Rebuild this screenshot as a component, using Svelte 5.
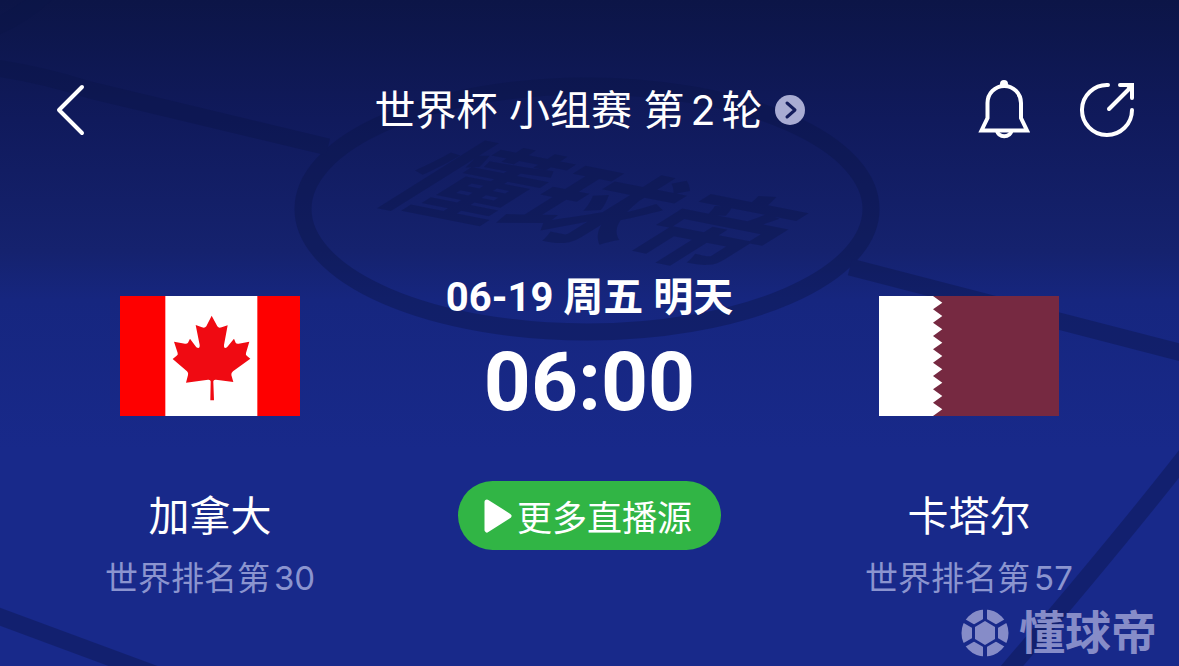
<script lang="ts">
  interface Team {
    name: string;
    rank: number;
    flag: 'canada' | 'qatar';
  }

  const home: Team = { name: '加拿大', rank: 30, flag: 'canada' };
  const away: Team = { name: '卡塔尔', rank: 57, flag: 'qatar' };

  // serrated edge of the Qatar flag, nine teeth
  const teeth = Array.from({ length: 9 }, (_, i) => `L190 ${i * 40 + 20} L162 ${i * 40 + 40}`).join(' ');
</script>

{#snippet teamCard(team: Team)}
  <div class="team">
    {#if team.flag === 'canada'}
      <svg class="team__flag" viewBox="0 0 540 360" role="img" aria-label={team.name}>
        <rect width="540" height="360" fill="#fff" />
        <rect width="136" height="360" fill="#fe0000" />
        <rect x="412" width="128" height="360" fill="#fe0000" />
        <path
          fill="#f00a12"
          d="M275 59 L259 91 Q254 98 246 94 L227 87 L239 147 Q240 160 229 154 L210 128 L204 140 Q201 144 195 143 L162 137 L173 171 Q175 177 169 180 L158 189 L201 226 Q206 231 204 237 L198 260 L264 251 Q273 250 272 259 L271 313 L282 313 L280 259 Q279 250 288 251 L340 258 L334 237 Q333 231 339 226 L391 188 L381 180 Q376 177 378 171 L388 137 L356 143 Q349 144 347 140 L342 128 L321 154 Q311 160 312 147 L323 88 L305 94 Q296 98 292 91 Z"
        />
      </svg>
    {:else}
      <svg class="team__flag" viewBox="0 0 540 360" role="img" aria-label={team.name}>
        <rect width="540" height="360" fill="#762941" />
        <path fill="#fff" d="M0 0 L162 0 {teeth} L0 360 Z" />
      </svg>
    {/if}
    <div class="team__name">{team.name}</div>
    <div class="team__rank">世界排名第<span class="num">{team.rank}</span></div>
  </div>
{/snippet}

<main class="page">
  <svg class="pitch" viewBox="0 0 1179 666" preserveAspectRatio="xMidYMid slice" aria-hidden="true">
    <g fill="none" stroke="#0b1548" stroke-width="17">
      <ellipse cx="587" cy="209" rx="284" ry="123" />
      <path d="M-10 67 Q40 74 90 90 L328 147" />
      <path d="M850 267 L1190 355" />
      <path d="M-10 29 Q20 18 48 -8" />
      <path d="M-10 613 L160 676" />
      <path d="M1190 450 Q1120 540 1000 680" />
    </g>
    <text class="pitch__logo" transform="matrix(1.22 0.24 -1.15 0.72 368 198)">懂球帝</text>
  </svg>

  <header class="header">
    <button class="icon-btn header__back" aria-label="返回">
      <svg width="30" height="52" viewBox="0 0 30 52" fill="none" stroke="#fff" stroke-width="4" stroke-linecap="round" stroke-linejoin="round">
        <path d="M26 3 L3 26 L26 49" />
      </svg>
    </button>
    <a class="header__title" href="#stage">
      <span>世界杯 小组赛 第<span class="num">2</span>轮</span>
      <svg width="30" height="30" viewBox="0 0 30 30" fill="none" aria-hidden="true">
        <circle cx="15" cy="15" r="15" fill="#a9acd3" />
        <path d="M12 8 L20 15 L12 22" stroke="#141c5c" stroke-width="3" stroke-linecap="round" stroke-linejoin="round" />
      </svg>
    </a>
    <div class="header__actions">
      <button class="icon-btn" aria-label="提醒">
        <svg width="54" height="60" viewBox="0 0 54 60" fill="none" stroke="#fff" stroke-width="4">
          <circle cx="26" cy="4" r="4" fill="#fff" stroke="none" />
          <path d="M3.500 50.500 L9.500 38 V23 A16.700 17 0 0 1 43 23 V38 L49 50.500 Z" />
          <path d="M19 51 A7.500 7 0 0 0 33.500 51" />
        </svg>
      </button>
      <button class="icon-btn" aria-label="分享">
        <svg width="56" height="56" viewBox="0 0 56 56" fill="none" stroke="#fff" stroke-width="4" stroke-linecap="round">
          <path d="M28 3 A25 25 0 1 0 52 28" />
          <path d="M29 27 L51 5" />
          <path d="M40 3 H52 V16" />
          <path d="M46 3 H52 V9 Z" fill="#fff" stroke-width="2" />
        </svg>
      </button>
    </div>
  </header>

  <section class="match">
    {@render teamCard(home)}

    <div class="info">
      <div class="info__date">06-19 周五 明天</div>
      <div class="info__time">06:00</div>
      <button class="live">
        <svg width="28" height="34" viewBox="0 0 28 34" aria-hidden="true">
          <path d="M3 3 L25 17 L3 31 Z" fill="#fff" stroke="#fff" stroke-width="5" stroke-linejoin="round" />
        </svg>
        更多直播源
      </button>
    </div>

    {@render teamCard(away)}
  </section>

  <div class="watermark">
    <svg width="48" height="48" viewBox="0 0 48 48" aria-hidden="true">
      <circle cx="24" cy="24" r="17" fill="none" stroke="#868cc8" stroke-width="13" />
      <g stroke="#18298a" stroke-width="4">
        {#each [0, 60, 120, 180, 240, 300] as angle (angle)}
          <path d="M24 12 V-1" transform="rotate({angle} 24 24)" />
        {/each}
      </g>
      <path d="M24 9 L37 16.500 V31.500 L24 39 L11 31.500 V16.500 Z" fill="#18298a" />
      <path d="M24 12 L34 18 V30 L24 36 L14 30 V18 Z" fill="#868cc8" />
    </svg>
    <span>懂球帝</span>
  </div>
</main>

<style>
  :global(body) {
    margin: 0;
    background: #18298a;
  }

  .page {
    position: relative;
    min-height: 100vh;
    box-sizing: border-box;
    overflow: hidden;
    background: linear-gradient(#0c1547 0, #101a5c 120px, #15226e 250px, #16267f 300px, #18298a 450px);
    color: #fff;
    font-family: Inter, 'Noto Sans CJK SC', sans-serif;
  }

  .pitch {
    position: absolute;
    inset: 0;
    width: 100%;
    height: 100%;
    opacity: 0.4;
  }

  .pitch__logo {
    font: 700 100px 'Noto Sans CJK SC', sans-serif;
    fill: #0b1548;
  }

  .header {
    position: relative;
    display: grid;
    grid-template-columns: 1fr auto 1fr;
    align-items: center;
    padding: 80px 43px 0;
  }

  .icon-btn {
    display: block;
    padding: 0;
    border: none;
    background: none;
    cursor: pointer;
  }

  .icon-btn svg {
    display: block;
  }

  .header__back {
    justify-self: start;
    margin-left: 13px;
  }

  .header__title {
    display: flex;
    align-items: center;
    gap: 12px;
    color: inherit;
    font-size: 41px;
    line-height: 60px;
    white-space: nowrap;
    text-decoration: none;
  }

  .num {
    margin: 0 6px;
  }

  .header__actions {
    display: flex;
    align-items: center;
    justify-content: flex-end;
    gap: 48px;
  }

  .match {
    position: relative;
    display: flex;
    justify-content: space-between;
    padding: 134px 100px 68px;
  }

  .team {
    display: flex;
    flex-direction: column;
    align-items: center;
    width: 220px;
    padding-top: 22px;
    white-space: nowrap;
  }

  .team__flag {
    display: block;
    width: 180px;
    height: 120px;
  }

  .team__name {
    margin-top: 76px;
    font-size: 41px;
    line-height: 48px;
  }

  .team__rank {
    margin-top: 18px;
    color: #8b94cf;
    font-size: 33px;
    line-height: 40px;
  }

  .team__rank .num {
    margin: 0 0 0 4px;
  }

  .info {
    display: flex;
    flex-direction: column;
    align-items: center;
    font-family: Roboto, 'Noto Sans CJK SC', sans-serif;
    font-weight: 700;
    white-space: nowrap;
  }

  .info__date {
    font-size: 40px;
    line-height: 48px;
  }

  .info__time {
    margin-top: 18px;
    font-size: 82px;
    line-height: 84px;
  }

  .live {
    display: flex;
    align-items: center;
    gap: 5px;
    height: 69px;
    margin-top: 57px;
    padding: 0 29px 0 26px;
    border: none;
    border-radius: 35px;
    background: #31b545;
    color: #fff;
    font: 400 35px Inter, 'Noto Sans CJK SC', sans-serif;
    cursor: pointer;
  }

  .watermark {
    position: absolute;
    right: 22px;
    bottom: 9px;
    display: flex;
    align-items: flex-start;
    gap: 10px;
    color: #868cc8;
    font: 700 46px/40px 'Noto Sans CJK SC', sans-serif;
  }
</style>
